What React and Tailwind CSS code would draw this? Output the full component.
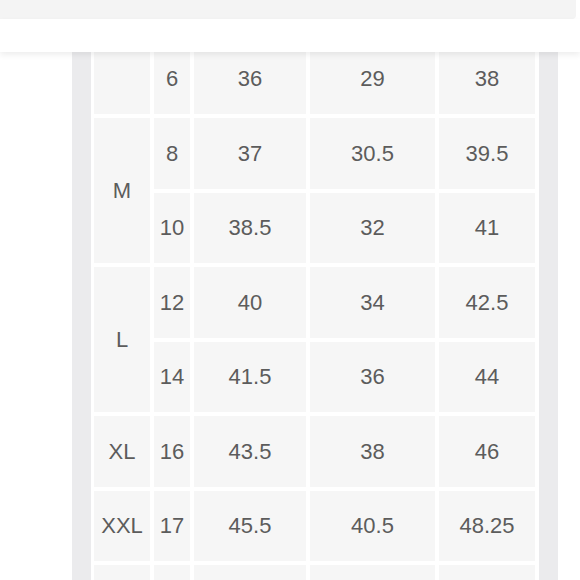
import { Fragment } from "react";

export default function App() {
  const rows = [
    { size: "", sizeSpan: 1, cells: ["6", "36", "29", "38"] },
    { size: "M", sizeSpan: 2, cells: ["8", "37", "30.5", "39.5"] },
    { size: null, cells: ["10", "38.5", "32", "41"] },
    { size: "L", sizeSpan: 2, cells: ["12", "40", "34", "42.5"] },
    { size: null, cells: ["14", "41.5", "36", "44"] },
    { size: "XL", sizeSpan: 1, cells: ["16", "43.5", "38", "46"] },
    { size: "XXL", sizeSpan: 1, cells: ["17", "45.5", "40.5", "48.25"] },
    { size: "", sizeSpan: 1, cells: ["", "", "", ""] },
  ];
  const cell =
    "bg-[#f6f6f6] flex items-center justify-center text-[22px] text-[#5c5c5c]";
  return (
    <div
      className="relative w-[580px] h-[580px] overflow-hidden bg-white"
      style={{ fontFamily: '"Liberation Sans", Arial, sans-serif' }}
    >
      <div className="ml-[72px] w-[486px] h-[640px] bg-[#ebebed] px-[19px]">
        <div className="bg-white pl-[3px] pr-[4px] pt-[43.5px] h-full">
          <div className="grid grid-cols-[56px_36px_112px_125px_96px] auto-rows-[70.5px] gap-[4px]">
            {rows.map((r, i) => (
              <Fragment key={i}>
                {r.size !== null && (
                  <div
                    className={
                      cell + (r.sizeSpan === 2 ? " row-span-2" : "")
                    }
                  >
                    {r.size}
                  </div>
                )}
                {r.cells.map((c, j) => (
                  <div key={j} className={cell}>
                    {c}
                  </div>
                ))}
              </Fragment>
            ))}
          </div>
        </div>
      </div>
      <div className="absolute left-0 top-0 w-full">
        <div className="h-[19px] bg-[#f4f4f4] mr-[4px] rounded-br-[4px]" />
        <div className="h-[33px] bg-white shadow-[0_3px_6px_rgba(0,0,0,0.07)]" />
      </div>
    </div>
  );
}
